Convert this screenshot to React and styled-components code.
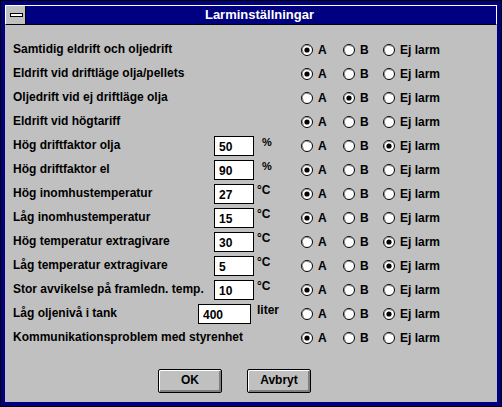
import { useState } from 'react';
import styled, { createGlobalStyle } from 'styled-components';

const GlobalStyle = createGlobalStyle`
  html, body {
    margin: 0;
    padding: 0;
    background: #c0c0c0;
  }
  body {
    font-family: "Liberation Sans", Arial, sans-serif;
  }
`;

const Window = styled.div`
  box-sizing: border-box;
  width: 502px;
  height: 407px;
  border: 1px solid #000;
  background: #000080;
  padding: 4px;
  display: flex;
  flex-direction: column;
`;

const TitleBar = styled.div`
  display: flex;
  height: 18px;
  border: 1px solid #fff;
  border-bottom: 1px solid #000;
  background: #000080;
`;

const SysMenu = styled.div`
  width: 19px;
  background: #c0c0c0;
  border-right: 1px solid #000;
  display: flex;
  align-items: center;
  justify-content: center;
`;

const SysBar = styled.div`
  box-sizing: border-box;
  width: 13px;
  height: 4px;
  border: 1px solid #000;
  background: #fff;
  margin-left: 1px;
`;

const Title = styled.div`
  flex: 1;
  text-align: center;
  color: #fff;
  font-weight: bold;
  font-size: 13px;
  line-height: 18px;
  padding-right: 3px;
`;

const Client = styled.div`
  flex: 1;
  background: #c0c0c0;
  padding-top: 13px;
  display: flex;
  flex-direction: column;
`;

const Row = styled.div`
  display: grid;
  grid-template-columns: 185px 56px 47px auto;
  align-items: center;
  height: 24px;
  padding-left: 8px;
  font-size: 12px;
  font-weight: bold;
  color: #000;
`;

const Label = styled.div`
  white-space: nowrap;
  margin-top: -2px;
`;

const Field = styled.input`
  box-sizing: border-box;
  width: ${({ $width }) => $width}px;
  margin-left: ${({ $offset }) => $offset}px;
  height: 20px;
  border: 1px solid #000;
  background: #fff;
  padding: 2px 0 0 4px;
  font-family: "Liberation Sans", Arial, sans-serif;
  font-size: 12px;
  font-weight: bold;
  color: #000;
  outline: none;
`;

const Unit = styled.div`
  align-self: start;
  padding-top: 1px;
  padding-left: ${({ $indent }) => $indent}px;
  line-height: 14px;
  font-size: ${({ $small }) => ($small ? 11 : 12)}px;
`;

const Options = styled.div`
  display: grid;
  grid-template-columns: 42px 40px auto;
  margin-top: -1px;
`;

const Option = styled.label`
  display: flex;
  align-items: center;
  gap: 5px;
  cursor: default;
`;

const Buttons = styled.div`
  display: flex;
  gap: 25px;
  margin-top: 19px;
  padding-left: 153px;
`;

const Button = styled.button`
  box-sizing: border-box;
  width: 64px;
  height: 24px;
  border: 1px solid #000;
  border-radius: 2px;
  background: #c0c0c0;
  box-shadow: inset 1px 1px 0 #fff, inset -2px -2px 0 #808080;
  font-family: "Liberation Sans", Arial, sans-serif;
  font-size: 12px;
  font-weight: bold;
  color: #000;
  padding: 0 0 2px;
`;

function RadioMark({ checked }) {
  return (
    <svg width="12" height="12" viewBox="0 0 12 12">
      <circle cx="6" cy="6" r="5.5" fill="#fff" stroke="#000" />
      <path d="M2.6 8.6 A4.2 4.2 0 0 1 8.6 2.6" fill="none" stroke="#808080" />
      {checked && <circle cx="6" cy="6" r="2.6" fill="#000" />}
    </svg>
  );
}

const choices = [
  { key: 'A', text: 'A' },
  { key: 'B', text: 'B' },
  { key: 'E', text: 'Ej larm' },
];

const alarms = [
  { label: 'Samtidig eldrift och oljedrift', sel: 'A' },
  { label: 'Eldrift vid driftläge olja/pellets', sel: 'A' },
  { label: 'Oljedrift vid ej driftläge olja', sel: 'B' },
  { label: 'Eldrift vid högtariff', sel: 'A' },
  { label: 'Hög driftfaktor olja', value: '50', unit: '%', sel: 'E' },
  { label: 'Hög driftfaktor el', value: '90', unit: '%', sel: 'A' },
  { label: 'Hög inomhustemperatur', value: '27', unit: '°C', sel: 'A' },
  { label: 'Låg inomhustemperatur', value: '15', unit: '°C', sel: 'A' },
  { label: 'Hög temperatur extragivare', value: '30', unit: '°C', sel: 'E' },
  { label: 'Låg temperatur extragivare', value: '5', unit: '°C', sel: 'E' },
  { label: 'Stor avvikelse på framledn. temp.', value: '10', unit: '°C', sel: 'A' },
  { label: 'Låg oljenivå i tank', value: '400', unit: 'liter', sel: 'E', wide: true },
  { label: 'Kommunikationsproblem med styrenhet', sel: 'A' },
];

export default function App() {
  const [selected, setSelected] = useState(alarms.map((a) => a.sel));

  const pick = (row, key) => {
    setSelected((prev) => prev.map((s, i) => (i === row ? key : s)));
  };

  return (
    <>
      <GlobalStyle />
      <Window>
        <TitleBar>
          <SysMenu>
            <SysBar />
          </SysMenu>
          <Title>Larminställningar</Title>
        </TitleBar>
        <Client>
          {alarms.map((a, i) => (
            <Row key={a.label}>
              <Label>{a.label}</Label>
              <div>
                {a.value && (
                  <Field
                    defaultValue={a.value}
                    $width={a.wide ? 53 : 40}
                    $offset={a.wide ? 0 : 16}
                  />
                )}
              </div>
              <Unit $indent={a.unit === '%' ? 8 : 3} $small={a.unit === '%'}>
                {a.unit}
              </Unit>
              <Options>
                {choices.map((c) => (
                  <Option key={c.key} onClick={() => pick(i, c.key)}>
                    <RadioMark checked={selected[i] === c.key} />
                    {c.text}
                  </Option>
                ))}
              </Options>
            </Row>
          ))}
          <Buttons>
            <Button>OK</Button>
            <Button>Avbryt</Button>
          </Buttons>
        </Client>
      </Window>
    </>
  );
}
